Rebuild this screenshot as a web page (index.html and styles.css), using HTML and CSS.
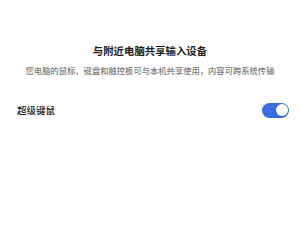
FILE: index.html
```html
<!DOCTYPE html>
<html>
<head>
<meta charset="utf-8">
<link rel="stylesheet" href="styles.css">
</head>
<body>
<div class="page">
  <div class="header">
    <div class="title">与附近电脑共享输入设备</div>
    <div class="subtitle">您电脑的鼠标、键盘和触控板可与本机共享使用，内容可跨系统传输</div>
  </div>
  <div class="row">
    <div class="label">超级键鼠</div>
    <div class="toggle"><div class="knob"></div></div>
  </div>
</div>
</body>
</html>
```
FILE: styles.css
```css
html, body {
  margin: 0;
  padding: 0;
  background: #ffffff;
}
body {
  width: 300px;
  height: 225px;
  overflow: hidden;
  font-family: "Noto Sans CJK SC", "Noto Sans", sans-serif;
}
.page {
  display: flex;
  flex-direction: column;
  padding-top: 44px;
}
.header {
  display: flex;
  flex-direction: column;
  align-items: center;
}
.title {
  font-size: 10.4px;
  line-height: 14px;
  font-weight: 600;
  color: #1c1c1c;
}
.subtitle {
  margin-top: 6px;
  font-size: 8.3px;
  line-height: 12px;
  font-weight: 500;
  color: #7c7c7c;
}
.row {
  margin-top: 25px;
  display: flex;
  align-items: center;
  justify-content: space-between;
  padding: 0 11px 0 17px;
  height: 18px;
}
.label {
  font-size: 9.5px;
  line-height: 14px;
  font-weight: 500;
  color: #1c1c1c;
}
.toggle {
  width: 27px;
  height: 15px;
  border-radius: 8px;
  background: #3a6de0;
  display: flex;
  align-items: center;
  justify-content: flex-end;
  padding: 0 1.5px;
  box-sizing: border-box;
}
.knob {
  width: 12px;
  height: 12px;
  border-radius: 50%;
  background: #ffffff;
}
```
